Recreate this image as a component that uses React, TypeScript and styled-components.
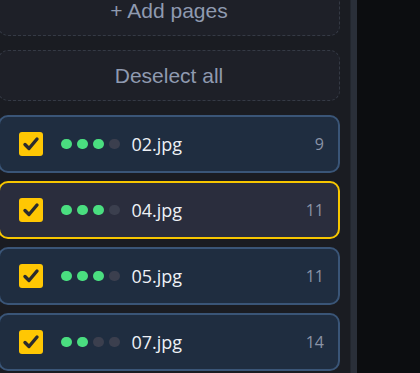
import styled, { createGlobalStyle } from 'styled-components';

// Pages panel: two dashed actions above a list of selected pages
interface PageItem {
    name: string;
    score: number;
    count: number;
    active?: boolean;
}

const pages: PageItem[] = [
    { name: '02.jpg', score: 3, count: 9 },
    { name: '04.jpg', score: 3, count: 11, active: true },
    { name: '05.jpg', score: 3, count: 11 },
    { name: '07.jpg', score: 2, count: 14 },
];

const GlobalStyle = createGlobalStyle`
    html, body { margin: 0; padding: 0; background: #0c0d10; overflow: hidden; }
    body { font-family: "Open Sans", "Noto Sans", sans-serif; }
`;

const Layout = styled.div`
    display: flex;
    height: 373px;
    width: 420px;
    overflow: hidden;
`;
const Sidebar = styled.div`
    width: 350px;
    flex-shrink: 0;
    background: #1a1c22;
    overflow: hidden;
`;
const Column = styled.div`
    display: flex;
    flex-direction: column;
    gap: 14px;
    width: 342px;
    margin: -15px 0 0 -2px;
`;
const DashedButton = styled.button`
    height: 51px;
    border: 1.5px dashed #353a45;
    border-radius: 10px;
    background: #1e2028;
    color: #8f9ab0;
    font-family: "Liberation Sans", Arial, sans-serif;
    font-size: 21px;
    cursor: pointer;
`;
const CardList = styled.div`
    display: flex;
    flex-direction: column;
    gap: 8px;
`;
const Card = styled.div<{ $active?: boolean }>`
    display: flex;
    align-items: center;
    height: 58px;
    box-sizing: border-box;
    padding: 0 14px 0 19px;
    border-radius: 10px;
    border: 2px solid ${p => (p.$active ? '#f7c600' : '#3a5577')};
    background: ${p => (p.$active ? '#2a2d3d' : '#1f2d40')};
`;
const CheckBox = styled.div`
    width: 24px;
    height: 24px;
    border-radius: 3px;
    background: #ffc703;
    display: flex;
    align-items: center;
    justify-content: center;
    flex-shrink: 0;
`;
const Dots = styled.div`
    display: flex;
    gap: 5.5px;
    margin-left: 18px;
`;
const Dot = styled.span<{ $on: boolean }>`
    width: 10.5px;
    height: 10.5px;
    border-radius: 50%;
    background: ${p => (p.$on ? '#4ade80' : '#3b3f4e')};
`;
const FileName = styled.span`
    margin-left: 12px;
    font-size: 18px;
    color: #eef1f6;
    flex: 1;
`;
const Count = styled.span`
    font-size: 16px;
    color: #8a93a6;
`;
const ScrollTrack = styled.div`
    width: 6px;
    flex-shrink: 0;
    background: #2a2f39;
    border-left: 1px solid #22262e;
`;
const Main = styled.div`
    flex: 1;
    background: #0c0d10;
`;

function Check() {
    return (
        <svg width="20" height="20" viewBox="0 0 20 20">
            <polyline points="4,10.5 8,14.5 16,5" fill="none" stroke="#2b2b2e" strokeWidth="3.4" strokeLinecap="round" strokeLinejoin="round" />
        </svg>
    );
}

export default function App() {
    return (
        <Layout>
            <GlobalStyle />
            <Sidebar>
                <Column>
                    <DashedButton>+ Add pages</DashedButton>
                    <DashedButton>Deselect all</DashedButton>
                    <CardList>
                        {pages.map(page => (
                            <Card key={page.name} $active={page.active}>
                                <CheckBox><Check /></CheckBox>
                                <Dots>
                                    {[0, 1, 2, 3].map(i => <Dot key={i} $on={i < page.score} />)}
                                </Dots>
                                <FileName>{page.name}</FileName>
                                <Count>{page.count}</Count>
                            </Card>
                        ))}
                    </CardList>
                </Column>
            </Sidebar>
            <ScrollTrack />
            <Main />
        </Layout>
    );
}
